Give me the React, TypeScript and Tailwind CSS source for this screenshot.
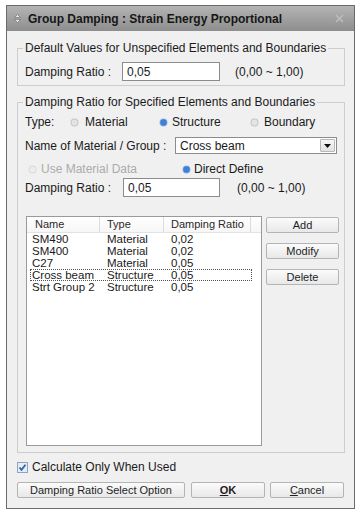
import React from 'react';

const font = "font-['Liberation_Sans','Noto_Sans',sans-serif]";

const Radio: React.FC<{ checked?: boolean; disabled?: boolean }> = ({ checked, disabled }) => (
  <svg width="9" height="9" viewBox="0 0 9 9" className="shrink-0">
    {checked ? (
      <>
        <circle cx="4.5" cy="4.5" r="4" fill="#8fb6e8" />
        <circle cx="4.5" cy="4.5" r="3.2" fill="#3f7fd6" />
      </>
    ) : (
      <>
        <circle cx="4.5" cy="4.5" r="4" fill={disabled ? '#dadada' : '#c6c6c6'} />
        <circle cx="4.5" cy="4.5" r="3" fill={disabled ? '#ececec' : '#e4e4e4'} />
      </>
    )}
  </svg>
);

const Btn: React.FC<{ className?: string; children: React.ReactNode }> = ({ className = '', children }) => (
  <div
    className={`h-[16px] flex items-center justify-center rounded-[2px] border border-[#b4b4b4] bg-gradient-to-b from-[#fbfbfb] to-[#e8e8e8] text-[11px] text-[#1e1e1e] leading-none ${className}`}
  >
    {children}
  </div>
);

const rows = [
  { name: 'SM490', type: 'Material', ratio: '0,02' },
  { name: 'SM400', type: 'Material', ratio: '0,02' },
  { name: 'C27', type: 'Material', ratio: '0,05' },
  { name: 'Cross beam', type: 'Structure', ratio: '0,05', focus: true },
  { name: 'Strt Group 2', type: 'Structure', ratio: '0,05' },
];

export default function App() {
  return (
    <div className={`w-[362px] h-[514px] bg-white pt-[5px] pl-[6px] ${font} text-[12px] text-[#1a1a1a]`}>
      <div className="w-[349px] h-[504px] border border-[#6a6a6a] bg-[#f0f0f0] flex flex-col">
        {/* title bar */}
        <div className="h-[25px] shrink-0 flex items-center bg-gradient-to-b from-[#b4b4b4] to-[#8e8e8e] pl-[7px] pr-[8px]">
          <svg width="7" height="9" viewBox="0 0 7 9" className="mr-[7px]">
            <path d="M3.5 0.5 L6.5 3.5 L0.5 3.5 Z" fill="#e6e6e6" stroke="#6a6a6a" strokeWidth="0.6" />
            <path d="M3.5 8.5 L6.5 5.5 L0.5 5.5 Z" fill="#e6e6e6" stroke="#6a6a6a" strokeWidth="0.6" />
          </svg>
          <span className="font-bold text-[12px] text-[#161616] leading-none">Group Damping : Strain Energy Proportional</span>
          <svg width="9" height="9" viewBox="0 0 9 9" className="ml-auto mr-[2px]">
            <path d="M1 1 L8 8 M8 1 L1 8" stroke="#bdbdbd" strokeWidth="1.6" />
          </svg>
        </div>

        <div className="pl-[10px] pr-[9px] flex flex-col">
          {/* group 1 */}
          <fieldset className="mt-[10px] border border-[#cdcdcd] pl-[7px] pb-[4px]">
            <legend className="-ml-[2px] px-[2px] h-[14px] leading-[14px]">Default Values for Unspecified Elements and Boundaries</legend>
            <div className="mt-[7px] h-[19px] flex items-center">
              <span className="w-[97px]">Damping Ratio :</span>
              <div className="w-[98px] h-[19px] border border-[#8c8c8c] bg-white flex items-center pl-[4px]">0,05</div>
              <span className="ml-[15px]">(0,00 ~ 1,00)</span>
            </div>
          </fieldset>

          {/* group 2 */}
          <fieldset className="mt-[9px] border border-[#cdcdcd] pl-[7px] pb-[6px]">
            <legend className="-ml-[2px] px-[2px] h-[14px] leading-[14px]">Damping Ratio for Specified Elements and Boundaries</legend>
            <div className="mt-[6px] h-[14px] flex items-center">
              <span className="w-[45px]">Type:</span>
              <div className="w-[89px] flex items-center gap-[6px]"><Radio /><span>Material</span></div>
              <div className="w-[91px] flex items-center gap-[4px]"><Radio checked /><span>Structure</span></div>
              <div className="flex items-center gap-[5px]"><Radio /><span>Boundary</span></div>
            </div>
            <div className="mt-[8px] h-[17px] flex items-center">
              <span className="w-[150px]">Name of Material / Group :</span>
              <div className="w-[162px] h-[17px] border border-[#8c8c8c] bg-white flex items-center pl-[4px] pr-[1px]">
                <span>Cross beam</span>
                <div className="ml-auto w-[15px] h-[13px] rounded-[1px] border border-[#b8b8b8] bg-gradient-to-b from-[#f7f7f7] to-[#e2e2e2] flex items-center justify-center">
                  <svg width="7" height="4" viewBox="0 0 7 4"><path d="M0 0 L7 0 L3.5 4 Z" fill="#111" /></svg>
                </div>
              </div>
            </div>
            <div className="mt-[8px] h-[14px] flex items-center">
              <div className="ml-[3px] w-[154px] flex items-center gap-[4px] text-[#ababab]"><Radio disabled /><span>Use Material Data</span></div>
              <div className="flex items-center gap-[3px]"><Radio checked /><span>Direct Define</span></div>
            </div>
            <div className="mt-[2px] h-[19px] flex items-center">
              <span className="w-[98px]">Damping Ratio :</span>
              <div className="w-[97px] h-[19px] border border-[#8c8c8c] bg-white flex items-center pl-[4px]">0,05</div>
              <span className="ml-[17px]">(0,00 ~ 1,00)</span>
            </div>

            <div className="mt-[19px] flex">
              <div className="ml-[1px] w-[236px] h-[230px] border border-[#9a9a9a] bg-white flex flex-col">
                <div className="h-[16px] shrink-0 flex border-b border-[#e2e2e2] bg-gradient-to-b from-white to-[#f6f6f6] text-[11px] text-[#2a2a2a] leading-none">
                  <div className="w-[73px] pl-[8px] border-r border-[#dcdcdc] flex items-center">Name</div>
                  <div className="w-[64px] pl-[7px] border-r border-[#dcdcdc] flex items-center">Type</div>
                  <div className="w-[87px] pl-[7px] border-r border-[#dcdcdc] flex items-center">Damping Ratio</div>
                  <div className="flex-1" />
                </div>
                {rows.map((r) => (
                  <div
                    key={r.name}
                    className={`ml-[3px] w-[222px] h-[12px] flex items-center text-[11.5px] leading-[12px] ${r.focus ? 'outline outline-1 outline-dotted outline-[#555] -outline-offset-1' : ''}`}
                  >
                    <span className="w-[77px] pl-[2px]">{r.name}</span>
                    <span className="w-[64px]">{r.type}</span>
                    <span>{r.ratio}</span>
                  </div>
                ))}
              </div>
              <div className="ml-[4px] flex flex-col gap-[10px] pt-[1px]">
                <Btn className="w-[73px]">Add</Btn>
                <Btn className="w-[73px]">Modify</Btn>
                <Btn className="w-[73px]">Delete</Btn>
              </div>
            </div>
          </fieldset>

          {/* checkbox */}
          <div className="mt-[7px] h-[14px] flex items-center gap-[4px]">
            <svg width="11" height="11" viewBox="0 0 11 11" className="shrink-0">
              <rect x="0.5" y="0.5" width="10" height="10" fill="#e4ecf6" stroke="#8ea3bd" />
              <path d="M2.5 5.5 L4.5 7.8 L8.5 2.8" fill="none" stroke="#2f5fa8" strokeWidth="1.7" />
            </svg>
            <span>Calculate Only When Used</span>
          </div>

          {/* bottom buttons */}
          <div className="mt-[8px] flex">
            <Btn className="w-[168px]">Damping Ratio Select Option</Btn>
            <Btn className="ml-[6px] w-[74px] font-bold"><span className="underline">O</span>K</Btn>
            <Btn className="ml-[5px] w-[74px]"><span className="underline">C</span>ancel</Btn>
          </div>
        </div>
      </div>
    </div>
  );
}
